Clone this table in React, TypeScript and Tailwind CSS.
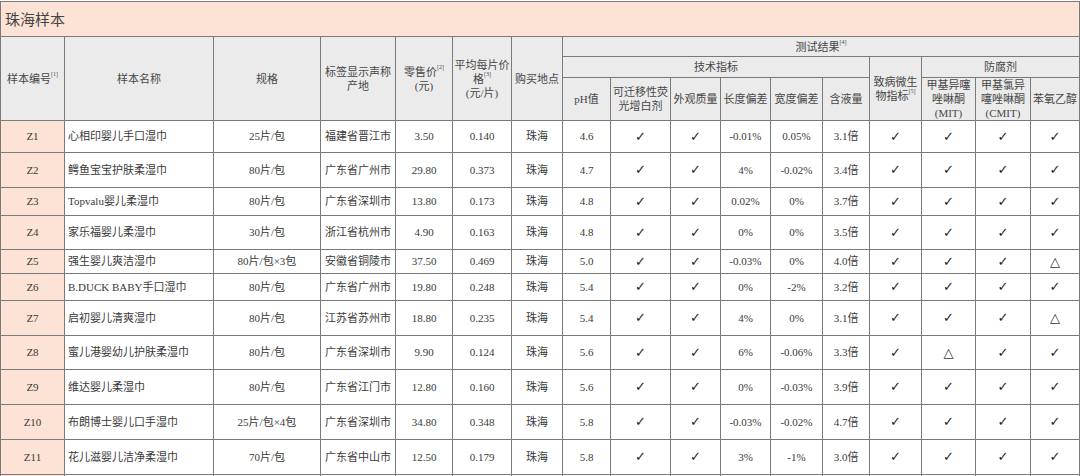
import React from "react";

type Row = string[];

const data: Row[] = [
  ["Z1", "心相印婴儿手口湿巾", "25片/包", "福建省晋江市", "3.50", "0.140", "珠海", "4.6", "✓", "✓", "-0.01%", "0.05%", "3.1倍", "✓", "✓", "✓", "✓"],
  ["Z2", "鳄鱼宝宝护肤柔湿巾", "80片/包", "广东省广州市", "29.80", "0.373", "珠海", "4.7", "✓", "✓", "4%", "-0.02%", "3.4倍", "✓", "✓", "✓", "✓"],
  ["Z3", "Topvalu婴儿柔湿巾", "80片/包", "广东省深圳市", "13.80", "0.173", "珠海", "4.8", "✓", "✓", "0.02%", "0%", "3.7倍", "✓", "✓", "✓", "✓"],
  ["Z4", "家乐福婴儿柔湿巾", "30片/包", "浙江省杭州市", "4.90", "0.163", "珠海", "4.8", "✓", "✓", "0%", "0%", "3.5倍", "✓", "✓", "✓", "✓"],
  ["Z5", "强生婴儿爽洁湿巾", "80片/包×3包", "安徽省铜陵市", "37.50", "0.469", "珠海", "5.0", "✓", "✓", "-0.03%", "0%", "4.0倍", "✓", "✓", "✓", "△"],
  ["Z6", "B.DUCK BABY手口湿巾", "80片/包", "广东省广州市", "19.80", "0.248", "珠海", "5.4", "✓", "✓", "0%", "-2%", "3.2倍", "✓", "✓", "✓", "✓"],
  ["Z7", "启初婴儿清爽湿巾", "80片/包", "江苏省苏州市", "18.80", "0.235", "珠海", "5.4", "✓", "✓", "4%", "0%", "3.1倍", "✓", "✓", "✓", "△"],
  ["Z8", "蜜儿港婴幼儿护肤柔湿巾", "80片/包", "广东省深圳市", "9.90", "0.124", "珠海", "5.6", "✓", "✓", "6%", "-0.06%", "3.3倍", "✓", "△", "✓", "✓"],
  ["Z9", "维达婴儿柔湿巾", "80片/包", "广东省江门市", "12.80", "0.160", "珠海", "5.6", "✓", "✓", "0%", "-0.03%", "3.9倍", "✓", "✓", "✓", "✓"],
  ["Z10", "布朗博士婴儿口手湿巾", "25片/包×4包", "广东省深圳市", "34.80", "0.348", "珠海", "5.8", "✓", "✓", "-0.03%", "-0.02%", "4.7倍", "✓", "✓", "✓", "✓"],
  ["Z11", "花儿滋婴儿洁净柔湿巾", "70片/包", "广东省中山市", "12.50", "0.179", "珠海", "5.8", "✓", "✓", "3%", "-1%", "3.0倍", "✓", "✓", "✓", "✓"],
  ["", "", "", "", "", "", "", "", "", "", "", "", "", "", "", "", ""],
];

const base = "border-r border-b border-[#7a7a7a] flex items-center justify-center text-center";
const hd = base + " bg-[#ebebeb] text-[#474747] text-[11px] leading-[14px]";

function Sup({ n }: { n: number }) {
  return <span className="inline-block align-top text-[6px] leading-[6px] relative -top-[1px]">[{n}]</span>;
}

function Cell({ v, i }: { v: string; i: number }) {
  if (i === 0) {
    return <div className={base + " bg-[#fce3d6] text-[11px]"}>{v}</div>;
  }
  if (i === 1) {
    return <div className={base + " justify-start! text-left pl-[3px] text-[11px]"}>{v}</div>;
  }
  if (v === "✓") {
    return (
      <div className={base + " text-[13px] text-[#1e1e1e]"} style={{ fontFamily: '"DejaVu Sans", sans-serif' }}>
        ✓
      </div>
    );
  }
  if (v === "△") {
    return (
      <div className={base + " text-[13px] text-[#333]"} style={{ fontFamily: '"DejaVu Sans", sans-serif' }}>
        △
      </div>
    );
  }
  return <div className={base + " text-[11px]"}>{v}</div>;
}

export default function App() {
  return (
    <div
      className="w-[1080px] h-[476px] overflow-hidden bg-white text-[#3a3a3a]"
      style={{ fontFamily: '"Liberation Serif", "Noto Sans CJK SC", serif' }}
    >
      <div className="mt-[1px] grid w-[1080px] border-l border-t border-[#7a7a7a] grid-cols-[64px_149px_107px_75px_57px_59px_51px_48px_60px_50px_50px_52px_47px_52px_54px_55px_49px] grid-rows-[35px_20px_21px_43px_32px_35px_28px_34px_24px_27px_35px_34px_35px_35px_35px_35px]">
        <div
          className="col-span-17 border-r border-b border-[#7a7a7a] bg-[#fde3d6] flex items-center pl-[4px] text-[15px] text-[#444]"
          style={{ fontFamily: '"Noto Sans CJK SC", sans-serif' }}
        >
          珠海样本
        </div>
        <div className={hd + " row-span-3"}>
          <span>
            样本编号
            <Sup n={1} />
          </span>
        </div>
        <div className={hd + " row-span-3"}>样本名称</div>
        <div className={hd + " row-span-3"}>规格</div>
        <div className={hd + " row-span-3"}>
          <span>
            标签显示声称
            <br />
            产地
          </span>
        </div>
        <div className={hd + " row-span-3"}>
          <span>
            零售价
            <Sup n={2} />
            <br />
            (元)
          </span>
        </div>
        <div className={hd + " row-span-3"}>
          <span>
            平均每片价
            <br />
            格<Sup n={3} />
            <br />
            (元/片)
          </span>
        </div>
        <div className={hd + " row-span-3"}>购买地点</div>
        <div className={hd + " col-span-10"}>
          <span>
            测试结果
            <Sup n={4} />
          </span>
        </div>
        <div className={hd + " col-span-6"}>技术指标</div>
        <div className={hd + " row-span-2"}>
          <span>
            致病微生
            <br />
            物指标
            <Sup n={5} />
          </span>
        </div>
        <div className={hd + " col-span-3"}>防腐剂</div>
        <div className={hd}>pH值</div>
        <div className={hd}>
          <span>
            可迁移性荧
            <br />
            光增白剂
          </span>
        </div>
        <div className={hd}>外观质量</div>
        <div className={hd}>长度偏差</div>
        <div className={hd}>宽度偏差</div>
        <div className={hd}>含液量</div>
        <div className={hd}>
          <span>
            甲基异噻
            <br />
            唑啉酮
            <br />
            (MIT)
          </span>
        </div>
        <div className={hd}>
          <span>
            甲基氯异
            <br />
            噻唑啉酮
            <br />
            (CMIT)
          </span>
        </div>
        <div className={hd}>苯氧乙醇</div>
        {data.map((row, r) =>
          row.map((v, i) => <Cell key={r + "-" + i} v={v} i={i} />)
        )}
      </div>
    </div>
  );
}
